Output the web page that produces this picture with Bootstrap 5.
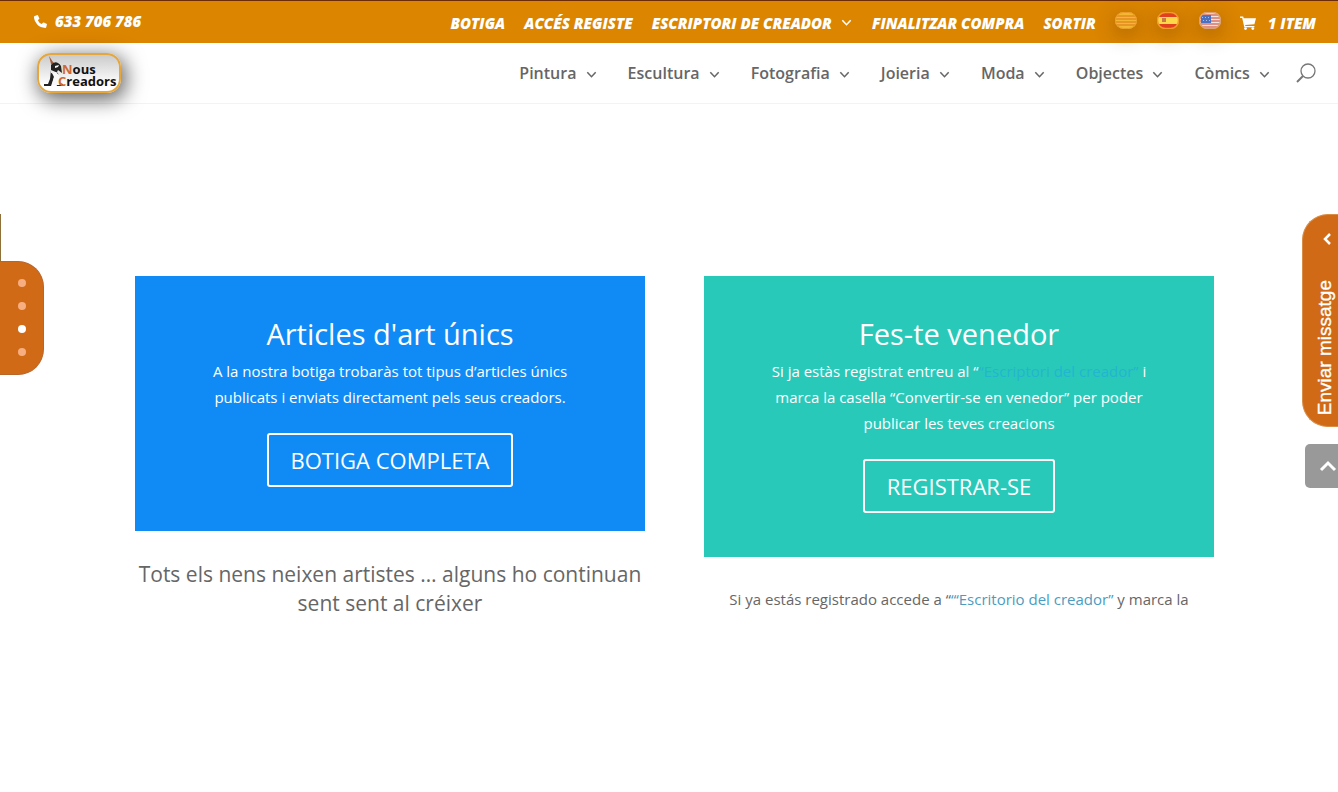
<!DOCTYPE html>
<html lang="ca">
<head>
<meta charset="utf-8">
<meta name="viewport" content="width=device-width, initial-scale=1">
<title>Nous Creadors</title>
<link href="https://cdn.jsdelivr.net/npm/bootstrap@5.3.0/dist/css/bootstrap.min.css" rel="stylesheet">
<style>
  body { font-family: "Open Sans", "Noto Sans", sans-serif; font-size: 15px; line-height: 26px; color: #666; background: #fff; overflow-x: hidden; }
  a { text-decoration: none; }
  .topbar { background: #dc8500; border-top: 1px solid #6b2a08; height: 43px; padding: 0 22px 2px 34px; font-size: 15px; font-style: italic; font-weight: 800; }
  .topbar a { color: #fff; white-space: nowrap; }
  .topbar-menu { gap: 19px; padding-top: 3px; }
  .flags { gap: 20px; padding-bottom: 4px; }
  .flags a { display: flex; border-radius: 9px; box-shadow: 0 5px 18px 4px rgba(90, 50, 0, .25); }
  .mainbar { height: 61px; padding: 0 22px 0 37px; border-bottom: 1px solid #f3f3f3; }
  .brand { display: block; border-radius: 14px; box-shadow: 3px 5px 20px 2px rgba(0, 0, 0, .6); }
  .brand svg { display: block; }
  .menu { gap: 31px; font-size: 16px; font-weight: 600; }
  .menu a { color: #666; white-space: nowrap; }
  .menu a svg { margin-left: 5px; }
  .search-btn { margin-left: -5px; }
  .page-body { padding: 172px 124px 60px 135px; }
  .page-body .row { --bs-gutter-x: 59px; }
  .blurb { padding: 43px 60px 44px; color: #fff; font-weight: 500; }
  .blurb h2 { font-size: 29px; line-height: 30px; font-weight: 400; margin-bottom: 9px; }
  .blurb-blue { background: #108bf6; }
  .blurb-teal { background: #29c9ba; }
  .blurb-teal p a { color: #22b5cf; }
  .blurb .btn { margin-top: 23px; height: 54px; padding: 0 22px; border: 2px solid #fff; border-radius: 3px; color: #fff; font-size: 22px; line-height: 50px; }
  .quote { margin-top: 29px; font-size: 21px; line-height: 29px; }
  .note { margin-top: 29px; }
  .note a { color: #4b9cc0; }
  .side-dots { position: fixed; left: 0; top: 261px; width: 44px; padding: 17px 0 18px; gap: 15px; background: #d16a17; border: 1px solid #b9652a; border-left: 0; border-radius: 0 26px 26px 0; }
  .side-dots button { width: 8px; height: 8px; padding: 0; border: 0; border-radius: 50%; background: #f7ae80; }
  .side-dots .current { background: #fff; }
  .side-line { position: fixed; left: 0; top: 214px; width: 1px; height: 48px; background: #8f6f3a; }
  .message-tab { position: fixed; right: 0; top: 214px; width: 36px; height: 213px; padding: 18px 0 11px 10px; border: 1px solid #d98d45; border-right: 0; border-radius: 26px 0 0 26px; background: #d16a17; color: #fff; font: 19px/24px "Liberation Sans", sans-serif; }
  .message-tab span { writing-mode: vertical-rl; transform: rotate(180deg); -webkit-text-stroke: .3px #fff; }
  .to-top { position: fixed; right: 0; top: 444px; width: 33px; height: 44px; padding: 0 0 4px 13px; border: 0; border-radius: 5px 0 0 5px; background: #999; }
</style>
</head>
<body>
<svg width="0" height="0" class="position-absolute" aria-hidden="true">
  <symbol id="chev" viewBox="0 0 10 10"><path d="M1.2 3l3.800 4 3.800-4" fill="none" stroke="currentColor" stroke-width="1.400"/></symbol>
</svg>
<header>
  <div class="topbar d-flex align-items-center justify-content-between">
    <a href="tel:633706786" class="d-flex align-items-center">
      <svg class="me-2" width="13" height="13" viewBox="0 0 13 13" fill="#fff" aria-hidden="true"><path d="M.3 1.200L3.200.1q.5-.2.800.3l1.300 2.800q.2.500-.2.900L3.800 5.200q1.200 2.600 3.900 3.900l1.200-1.400q.4-.4.900-.2l2.700 1.200q.6.300.4.900l-.7 2.700q-.2.600-.8.600Q6.300 12.800 3.200 9.600T-.1 2Q-.1 1.400.3 1.200z"/></svg>
      633 706 786</a>
    <nav class="topbar-menu d-flex align-items-center" aria-label="Compte">
      <a href="#">BOTIGA</a>
      <a href="#">ACCÉS REGISTE</a>
      <a href="#" class="d-flex align-items-center">ESCRIPTORI DE CREADOR <svg class="ms-2" width="13" height="11" aria-hidden="true"><use href="#chev"/></svg></a>
      <a href="#">FINALITZAR COMPRA</a>
      <a href="#">SORTIR</a>
      <div class="flags d-flex">
        <a href="#" aria-label="Català"><svg width="22" height="17" viewBox="0 0 22 17"><defs><clipPath id="oval"><rect width="22" height="17" rx="9"/></clipPath></defs><g clip-path="url(#oval)"><path fill="#f4b731" d="M0 0h22v17H0z"/><path stroke="#e28b20" stroke-width="1.500" d="M0 4h22M0 7h22M0 10h22M0 13h22"/></g><rect x=".5" y=".5" width="21" height="16" rx="8" fill="none" stroke="#e89d2c"/></svg></a>
        <a href="#" aria-label="Español"><svg width="22" height="17" viewBox="0 0 22 17"><g clip-path="url(#oval)"><path fill="#e0401d" d="M0 0h22v17H0z"/><path fill="#ffd84a" d="M0 5h22v7H0z"/><path fill="#c97a45" d="M5 6h4v4H5z"/></g><rect x=".5" y=".5" width="21" height="16" rx="8" fill="none" stroke="#f29a2c" stroke-width="1.500"/></svg></a>
        <a href="#" aria-label="English"><svg width="22" height="17" viewBox="0 0 22 17"><g clip-path="url(#oval)"><path fill="#f3e2dc" d="M0 0h22v17H0z"/><path stroke="#da7468" stroke-width="1.400" d="M0 3h22M0 6h22M0 9h22M0 12h22M0 15h22"/><path fill="#4b70bf" d="M2 3h10v8H2z"/><path stroke="#a9bce4" stroke-dasharray="1 2" d="M3 5.500h9M4 8.500h8"/></g><rect x=".5" y=".5" width="21" height="16" rx="8" fill="none" stroke="#dda070" stroke-width="1.500"/></svg></a>
      </div>
      <a href="#" class="d-flex align-items-center"><svg width="16" height="14" viewBox="0 0 16 14" fill="#fff" class="me-2 flex-shrink-0" aria-hidden="true"><path d="M0 .5h3.200l.5 1.700H16l-1.600 6.100-9.300.7.300 1h9v1.300H4.300L2.200 1.900H0z"/><circle cx="5.500" cy="12.600" r="1.400"/><circle cx="12.800" cy="12.600" r="1.400"/></svg><span class="ms-1">1 ITEM</span></a>
    </nav>
  </div>
  <div class="mainbar d-flex align-items-center justify-content-between">
    <a href="#" class="brand" aria-label="Nous Creadors">
      <svg width="84" height="40" viewBox="0 0 84 40">
        <defs><linearGradient id="plate" x2="0" y2="1"><stop offset="0" stop-color="#c9c9c9"/><stop offset=".8" stop-color="#fff"/></linearGradient></defs>
        <rect x="1" y="1" width="82" height="38" rx="13" fill="url(#plate)" stroke="#e5a73c" stroke-width="2"/>
        <path d="M12 3l4 6 5 4-4 1-3-3z" fill="#a55b37"/>
        <path d="M14 12q5-6 10 1l1 7-4-3-2 4-5-1zM14 17l-1 9-2 5H7v2h7l3-9 3 9h6v-2l-3-1-2-10z" fill="#222"/>
        <path d="M15 20l4-1 3 3 1 10h-8l2-8zM18 13l4-1-1 2-3 1z" fill="#f8f8f8"/>
        <g font-family="Open Sans, sans-serif" font-size="13" font-weight="700" fill="#111"><text x="25" y="21"><tspan fill="#cf6a2e">N</tspan>ous</text><text x="21" y="33"><tspan fill="#cf6a2e">C</tspan>readors</text></g>
      </svg></a>
    <nav class="menu d-flex align-items-center" aria-label="Principal">
      <a href="#">Pintura <svg width="11" height="11" aria-hidden="true"><use href="#chev"/></svg></a>
      <a href="#">Escultura <svg width="11" height="11" aria-hidden="true"><use href="#chev"/></svg></a>
      <a href="#">Fotografia <svg width="11" height="11" aria-hidden="true"><use href="#chev"/></svg></a>
      <a href="#">Joieria <svg width="11" height="11" aria-hidden="true"><use href="#chev"/></svg></a>
      <a href="#">Moda <svg width="11" height="11" aria-hidden="true"><use href="#chev"/></svg></a>
      <a href="#">Objectes <svg width="11" height="11" aria-hidden="true"><use href="#chev"/></svg></a>
      <a href="#">Còmics <svg width="11" height="11" aria-hidden="true"><use href="#chev"/></svg></a>
      <button type="button" class="search-btn btn p-0 border-0 d-flex" aria-label="Cerca"><svg width="20" height="20" viewBox="0 0 20 20" fill="none" stroke="#777"><circle cx="12" cy="8" r="7" stroke-width="1.300"/><path d="M7 13l-6 6" stroke-width="2"/></svg></button>
    </nav>
  </div>
</header>

<main class="page-body text-center">
  <div class="row">
    <section class="col-6">
      <div class="blurb blurb-blue">
        <h2>Articles d'art únics</h2>
        <p class="mb-0">A la nostra botiga trobaràs tot tipus d’articles únics publicats i enviats directament pels seus creadors.</p>
        <a href="#" class="btn">BOTIGA COMPLETA</a>
      </div>
      <p class="quote mb-0">Tots els nens neixen artistes … alguns ho continuan sent sent al créixer</p>
    </section>
    <section class="col-6">
      <div class="blurb blurb-teal">
        <h2>Fes-te venedor</h2>
        <p class="mb-0">Si ja estàs registrat entreu al “<a href="#">“Escriptori del creador”</a> i marca la casella “Convertir-se en venedor” per poder publicar les teves creacions</p>
        <a href="#" class="btn">REGISTRAR-SE</a>
      </div>
      <p class="note mb-0">Si ya estás registrado accede a “<a href="#">“‘Escritorio del creador”</a> y marca la</p>
    </section>
  </div>
</main>

<div class="side-line"></div>
<nav class="side-dots d-flex flex-column align-items-center" aria-label="Seccions">
  <button type="button" aria-label="Secció 1"></button>
  <button type="button" aria-label="Secció 2"></button>
  <button type="button" class="current" aria-label="Secció 3"></button>
  <button type="button" aria-label="Secció 4"></button>
</nav>
<button type="button" class="message-tab d-flex flex-column justify-content-between">
  <svg width="24" height="12" viewBox="0 0 24 12" fill="none" stroke="#fff" stroke-width="2.500" aria-hidden="true"><path d="M17 1l-5 5 5 5"/></svg>
  <span>Enviar missatge</span>
</button>
<button type="button" class="to-top" aria-label="Amunt"><svg width="18" height="12" viewBox="0 0 18 12" fill="none" stroke="#fff" stroke-width="3" aria-hidden="true"><path d="M2 10l7-7 7 7"/></svg></button>
<script src="https://cdn.jsdelivr.net/npm/bootstrap@5.3.0/dist/js/bootstrap.bundle.min.js"></script>
</body>
</html>
